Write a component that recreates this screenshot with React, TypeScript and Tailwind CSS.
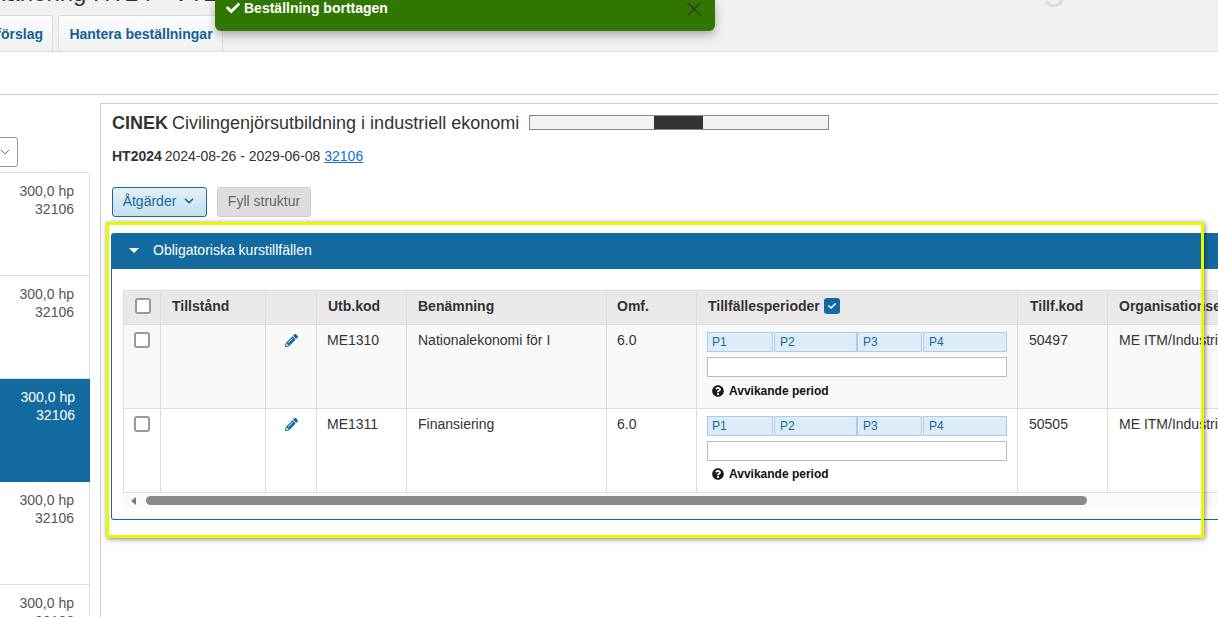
import { ChevronDown, X } from "lucide-react";
import { FaCheck, FaPencilAlt, FaQuestionCircle } from "react-icons/fa";

const programs = [
  { selected: false, height: "h-[103px]" },
  { selected: false, height: "h-[103px]" },
  { selected: true, height: "h-[103px]" },
  { selected: false, height: "h-[103px]" },
  { selected: false, height: "h-[103px]" },
];

const rows = [
  { code: "ME1310", name: "Nationalekonomi för I", size: "6.0", tillf: "50497", org: "ME ITM/Industriell ekonomi" },
  { code: "ME1311", name: "Finansiering", size: "6.0", tillf: "50505", org: "ME ITM/Industriell ekonomi" },
];

const thClass = "border border-[#dddddd] bg-[#e9e9e9] px-[11px] pb-[3px] text-left align-middle font-bold text-[#333333]";
const tdClass = "border border-[#dddddd] px-[10px] pt-[5px] align-top";

function Checkbox() {
  return <div className="size-4 rounded-[3px] border-2 border-[#999999] bg-white" />;
}

function Period({ label, className }: { label: string; className: string }) {
  return (
    <div className={`${className} flex h-5 items-center border border-[#a6cfe9] bg-[#deecf7] text-xs text-[#126a9f]`}>
      {label}
    </div>
  );
}

function Periods({ hintGap }: { hintGap: string }) {
  return (
    <div className="mt-[2px] w-[300px]">
      <div className="flex">
        <Period label="P1" className="w-[66px] pl-1" />
        <Period label="P2" className="ml-px w-[83px] pl-[5px]" />
        <Period label="P3" className="w-[65px] pl-[5px]" />
        <Period label="P4" className="ml-px w-[84px] pl-[5px]" />
      </div>
      <div className="mt-[5px] h-5 border border-[#bbbbbb] bg-white" />
      <div className={`${hintGap} flex h-[20px] items-center gap-[5px] pl-[5px] text-xs font-bold text-[#111111]`}>
        <FaQuestionCircle className="size-3 text-[#1a1a1a]" />
        Avvikande period
      </div>
    </div>
  );
}

export default function App() {
  return (
    <div className="relative h-[617px] w-[1218px] overflow-hidden bg-white text-sm leading-5 text-[#333333] [font-family:'Liberation_Sans',Arial,sans-serif]">
      {/* page header */}
      <div className="relative h-[52px] overflow-hidden border-b border-[#dddddd] bg-[#f1f1f1]">
        <div className="-mt-[22px] -ml-[15px] h-[29px] text-[24px] leading-[29px] whitespace-nowrap text-[#333333]">
          Planering HT24 - VT25
        </div>
        <div className="absolute -top-[42px] left-[1042px] text-[44px] leading-[50px] text-[#d8dce3]">g</div>
        <div className="mt-[8px] flex gap-[5px] font-bold text-[#0f6297]">
          <div className="flex h-9 w-[53px] items-center justify-end overflow-hidden rounded-tr-[3px] border-t border-r border-[#dddddd] bg-gradient-to-b from-[#fcfcfc] to-[#f1f1f1] pr-[9px] whitespace-nowrap">
            Beställningsförslag
          </div>
          <div className="flex h-9 w-[165px] items-center justify-center rounded-t-[3px] border-x border-t border-[#dddddd] bg-gradient-to-b from-[#fcfcfc] to-[#f1f1f1] pl-px whitespace-nowrap">
            Hantera beställningar
          </div>
        </div>
      </div>

      <div className="mt-[42px] flex border-t border-[#cccccc] pt-2">
        {/* program list */}
        <div className="w-[90px] shrink-0 pt-[34px]">
          <div className="-ml-[10px] flex h-[30px] w-[28px] items-center justify-end rounded-[3px] border border-[#999999] bg-white pr-[4px]">
            <ChevronDown className="size-[16px] stroke-[1.5] text-[#777777]" />
          </div>
          <div className="mt-[5px] rounded-tr-[4px] border-t border-r border-[#dddddd]">
            {programs.map((p, i) => (
              <div
                key={i}
                className={`${p.height} pt-[9px] pr-[15px] text-right ${
                  p.selected ? "-mr-px bg-[#126a9f] pr-4 text-white" : "border-b border-[#dddddd] bg-white text-[#555555]"
                }`}
              >
                <div className="leading-[18px]">300,0 hp</div>
                <div className="leading-[18px]">32106</div>
              </div>
            ))}
          </div>
        </div>

        {/* program detail */}
        <div className="ml-[10px] w-[1200px] shrink-0 border-t border-l border-[#cccccc] pt-2 pl-[11px]">
          <div className="flex h-[21px] items-start">
            <div className="pt-px text-[18px] leading-5 whitespace-nowrap">
              <span className="-mr-px font-bold">CINEK</span> Civilingenjörsutbildning i industriell ekonomi
            </div>
            <div className="mt-[3px] ml-[10px] flex h-[15px] w-[300px] border border-[#888888] bg-[#f3f3f3]">
              <div className="ml-[124px] w-[49px] bg-[#333333]" />
            </div>
          </div>
          <div className="mt-[13px]">
            <span className="-mr-px font-bold">HT2024</span> 2024-08-26 - 2029-06-08{" "}
            <span className="text-[#0f6fd6] underline">32106</span>
          </div>
          <div className="mt-[21px] flex gap-[10px]">
            <div className="flex h-[30px] w-[95px] items-center justify-center gap-[6px] rounded-[3px] border border-[#126a9f] bg-gradient-to-b from-[#e4f0f8] to-[#c5deef] pb-[2px] text-[#126a9f]">
              Åtgärder
              <ChevronDown className="size-[14px] stroke-[3]" />
            </div>
            <div className="flex h-[30px] w-[94px] items-center justify-center rounded-[3px] border border-[#cccccc] bg-[#dddddd] pb-[2px] text-[#666666]">
              Fyll struktur
            </div>
          </div>

          {/* section */}
          <div className="mt-4 -ml-px">
            <div className="flex h-9 items-center rounded-t-[3px] bg-[#126a9f] pb-[2px] pl-[18px] text-white">
              <svg viewBox="0 0 10 5" className="h-[5px] w-[10px] fill-white">
                <path d="M0 0h10L5 5z" />
              </svg>
              <span className="ml-[14px]">Obligatoriska kurstillfällen</span>
            </div>
            <div className="rounded-b-[3px] border-x border-b border-[#126a9f] pt-[21px] pb-[11px] pl-[11px]">
              <table className="w-[1284px] table-fixed border-collapse">
                <colgroup>
                  <col className="w-[37px]" />
                  <col className="w-[105px]" />
                  <col className="w-[51px]" />
                  <col className="w-[90px]" />
                  <col className="w-[200px]" />
                  <col className="w-[90px]" />
                  <col className="w-[321px]" />
                  <col className="w-[90px]" />
                  <col className="w-[300px]" />
                </colgroup>
                <thead>
                  <tr className="h-[34px]">
                    <th className={thClass}>
                      <Checkbox />
                    </th>
                    <th className={thClass}>Tillstånd</th>
                    <th className={thClass}></th>
                    <th className={thClass}>Utb.kod</th>
                    <th className={thClass}>Benämning</th>
                    <th className={`${thClass} pl-[10px]`}>Omf.</th>
                    <th className={thClass}>
                      <div className="flex items-center gap-1">
                        Tillfällesperioder
                        <div className="flex size-4 items-center justify-center rounded-[3px] bg-[#126a9f]">
                          <FaCheck className="size-2 text-white" />
                        </div>
                      </div>
                    </th>
                    <th className={`${thClass} pl-3`}>Tillf.kod</th>
                    <th className={`${thClass} whitespace-nowrap`}>Organisationsenhet</th>
                  </tr>
                </thead>
                <tbody>
                  {rows.map((row, i) => (
                    <tr key={row.code} className={`h-[84px] ${i === 0 ? "bg-[#f9f9f9]" : "bg-white"}`}>
                      <td className={tdClass}>
                        <div className="pt-[2px]">
                          <Checkbox />
                        </div>
                      </td>
                      <td className={tdClass}></td>
                      <td className={tdClass}>
                        <div className="flex justify-end pt-[4px] pr-[8px]">
                          <FaPencilAlt className="size-[13px] text-[#126a9f]" />
                        </div>
                      </td>
                      <td className={tdClass}>{row.code}</td>
                      <td className={`${tdClass} pl-[11px]`}>{row.name}</td>
                      <td className={tdClass}>{row.size}</td>
                      <td className={tdClass}>
                        <Periods hintGap={i === 0 ? "mt-[4px]" : "mt-[3px]"} />
                      </td>
                      <td className={`${tdClass} pl-[11px]`}>{row.tillf}</td>
                      <td className={`${tdClass} pl-[11px] whitespace-nowrap`}>{row.org}</td>
                    </tr>
                  ))}
                </tbody>
              </table>
              <div className="flex h-[15px] w-[1284px] items-center bg-[#fafafa] pl-2">
                <svg viewBox="0 0 5 8" className="h-2 w-[5px] fill-[#777777]">
                  <path d="M5 0v8L0 4z" />
                </svg>
                <div className="ml-[10px] h-[9px] w-[941px] rounded-full bg-[#8a8a8a]" />
              </div>
            </div>
          </div>
        </div>
      </div>

      {/* toast */}
      <div className="absolute top-0 left-[215px] flex h-[31px] w-[500px] justify-between rounded-b-[6px] bg-[#317600] pr-[9px] pl-[11px] shadow-[0_4px_10px_rgba(0,0,0,0.3)]">
        <div className="flex h-4 items-center gap-1 font-bold text-white">
          <FaCheck className="size-[14px]" />
          Beställning borttagen
        </div>
        <X className="-mt-[3px] size-[24px] stroke-[1.5] text-[#2a3f1c]" />
      </div>

      {/* highlight frame */}
      <div className="absolute top-[222px] left-[106px] h-[316px] w-[1098px] border-[3px] border-[#e5fa00] shadow-[1px_1px_5px_rgba(0,0,0,0.5)]" />
    </div>
  );
}
